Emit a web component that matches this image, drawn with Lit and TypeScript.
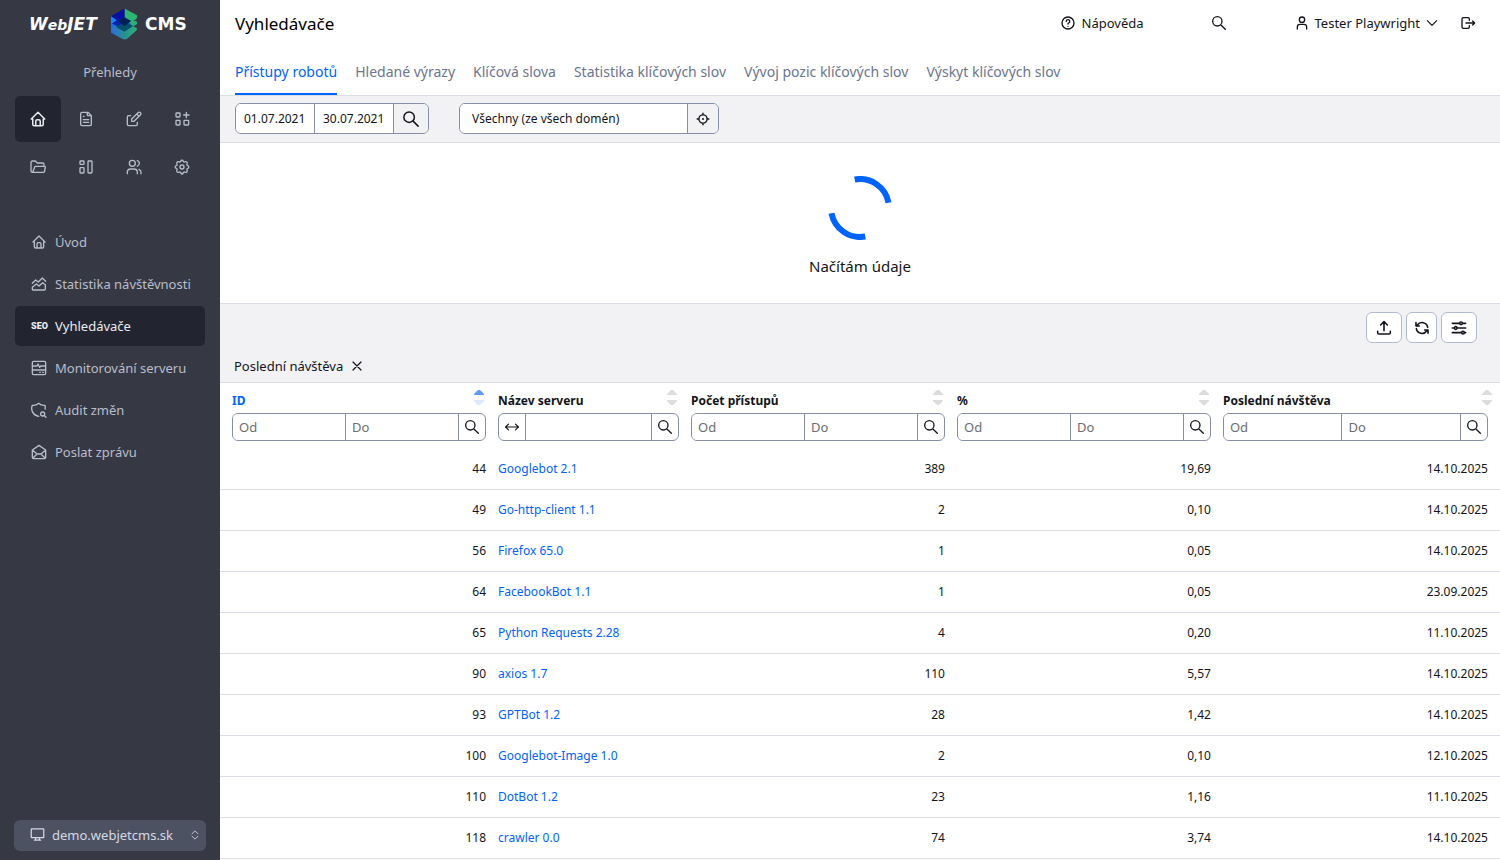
import { LitElement, html, css, svg } from "lit";
import { customElement, state } from "lit/decorators.js";
import { classMap } from "lit/directives/class-map.js";

const ICONS: Record<string, string> = {
  home: "M5 12H3l9-9 9 9h-2M5 12v7a2 2 0 0 0 2 2h10a2 2 0 0 0 2-2v-7M9 21v-6a2 2 0 0 1 2-2h2a2 2 0 0 1 2 2v6",
  file: "M14 2v4a1 1 0 0 0 1 1h5M18 22H6a2 2 0 0 1-2-2V4a2 2 0 0 1 2-2h9l5 5v13a2 2 0 0 1-2 2zM8 8h1M8 13h8M8 17h8",
  edit: "M7 7H4a2 2 0 0 0-2 2v11a2 2 0 0 0 2 2h11a2 2 0 0 0 2-2v-3M8.500 15.500h3.500l9.500-9.500a2.300 2.300 0 0 0-3.500-3.500L8.500 12v3.500M16 4.500l3.500 3.500",
  apps: "M4 3h4a1 1 0 0 1 1 1v4a1 1 0 0 1-1 1H4a1 1 0 0 1-1-1V4a1 1 0 0 1 1-1zM4 14h4a1 1 0 0 1 1 1v5a1 1 0 0 1-1 1H4a1 1 0 0 1-1-1v-5a1 1 0 0 1 1-1zM16 14h5a1 1 0 0 1 1 1v5a1 1 0 0 1-1 1h-5a1 1 0 0 1-1-1v-5a1 1 0 0 1 1-1zM14.500 6h8M18.500 2v8",
  folder: "M4 20l3.200-8.400A1 1 0 0 1 8.200 11H22a1 1 0 0 1 .986 1.164l-1.200 6.211A2 2 0 0 1 19.800 20H3.500a2 2 0 0 1-2-2V5a2 2 0 0 1 2-2h4.500l3 3h8a2 2 0 0 1 2 2v3",
  layout: "M4 3h4a1 1 0 0 1 1 1v3a1 1 0 0 1-1 1H4a1 1 0 0 1-1-1V4a1 1 0 0 1 1-1zM4 13h4a1 1 0 0 1 1 1v6a1 1 0 0 1-1 1H4a1 1 0 0 1-1-1v-6a1 1 0 0 1 1-1zM16 3h4a1 1 0 0 1 1 1v16a1 1 0 0 1-1 1h-4a1 1 0 0 1-1-1V4a1 1 0 0 1 1-1z",
  users: "M5 6.500a4.500 4.500 0 1 0 9 0a4.500 4.500 0 1 0-9 0M2 22v-2a5 5 0 0 1 5-5h5a5 5 0 0 1 5 5v2M17 2.300a4.500 4.500 0 0 1 0 8.500M22.500 22v-2a5 5 0 0 0-3-4.500",
  gear: "M10.325 3.017c.426-1.756 2.924-1.756 3.35 0a1.924 1.924 0 0 0 2.873 1.166c1.843-1.040 4.110 1.126 3.070 2.970a1.924 1.924 0 0 0 1.165 2.872c1.956.426 1.956 3.524 0 3.950a1.924 1.924 0 0 0-1.166 2.873c1.040 1.843-1.226 4.010-3.070 2.970a1.924 1.924 0 0 0-2.872 1.165c-.426 1.956-2.924 1.956-3.350 0a1.924 1.924 0 0 0-2.873-1.166c-1.843 1.040-4.110-1.126-3.070-2.970a1.924 1.924 0 0 0-1.165-2.872c-1.956-.426-1.956-3.524 0-3.950a1.924 1.924 0 0 0 1.166-2.873c-1.040-1.843 1.226-4.010 3.070-2.970c1.200.608 2.596.07 2.872-1.165zM9 12a3 3 0 1 0 6 0a3 3 0 1 0-6 0",
  chart: "M2 11l5-5 4 3 6-6 5 5M4 21h16a1.500 1.500 0 0 0 1.500-1.500V13l-4-3-5.500 5-4-3-6 5v3a1 1 0 0 0 1 1z",
  server: "M4 2h16a2 2 0 0 1 2 2v16a2 2 0 0 1-2 2H4a2 2 0 0 1-2-2V4a2 2 0 0 1 2-2zM2 9h7l1.500-3 2.500 5 1.500-2H22M2 15h20M13 18.500h1M17.500 18.500h1",
  shield: "M11.500 21.500A12 12 0 0 1 2 5 12 12 0 0 0 11.500 2 12 12 0 0 0 21 5a15 15 0 0 1 .2 5.500M14.500 18a3 3 0 1 0 6 0a3 3 0 1 0-6 0M20 20.500l2.500 2.500",
  mail: "M2 9l10-7 10 7v11a2 2 0 0 1-2 2H4a2 2 0 0 1-2-2V9l7 6h6l7-6M9 15l-6 6M15 15l6 6",
  desktop: "M3 3h18a1 1 0 0 1 1 1v12a1 1 0 0 1-1 1H3a1 1 0 0 1-1-1V4a1 1 0 0 1 1-1zM7 21h10M9 17v4M15 17v4",
  selector: "M5 9l7-7 7 7M5 15l7 7 7-7",
  help: "M3 12a9 9 0 1 0 18 0a9 9 0 1 0-18 0M12 17v.01M12 13.5a1.5 1.5 0 0 1 1-1.5 2.6 2.6 0 1 0-3.6-2.4",
  search: "M2.5 9.5a7 7 0 1 0 14 0a7 7 0 1 0-14 0M21.5 21.5l-7-7",
  user: "M8 7a4 4 0 1 0 8 0a4 4 0 1 0-8 0M5 21v-3a4 4 0 0 1 4-4h6a4 4 0 0 1 4 4v3",
  down: "M4 8l8 8 8-8",
  logout: "M14 8V6a2 2 0 0 0-2-2H5a2 2 0 0 0-2 2v12a2 2 0 0 0 2 2h7a2 2 0 0 0 2-2v-2M9 12h13M19 9l3 3-3 3",
  upload: "M2.500 17v2a2 2 0 0 0 2 2h15a2 2 0 0 0 2-2v-2M7 7.500l5-5 5 5M12 3v13",
  refresh: "M20.500 11A8.600 8.600 0 0 0 5 7.500L3.500 9M3 4v5h5M3.500 13A8.600 8.600 0 0 0 19 16.500l1.500-1.500M21 20v-5h-5",
  sliders: "M13 5a2 2 0 1 0 4 0a2 2 0 1 0-4 0M2 5h11M17 5h5M5 12a2 2 0 1 0 4 0a2 2 0 1 0-4 0M2 12h3M9 12h13M16 19a2 2 0 1 0 4 0a2 2 0 1 0-4 0M2 19h14M20 19h2",
  target: "M5 12a7 7 0 1 0 14 0a7 7 0 1 0-14 0M12 2v3M12 19v3M19 12h3M2 12h3M11.500 12a.5 .5 0 1 0 1 0a.5 .5 0 1 0-1 0",
  span: "M6 7l-5 5 5 5M18 7l5 5-5 5M1 12h22",
  close: "M4 4l16 16M20 4L4 20",
};

const icon = (name: string, size = 18, stroke = 2) => html`<svg
  width=${size} height=${size} viewBox="0 0 24 24" fill="none" stroke="currentColor"
  stroke-width=${stroke} stroke-linecap="round" stroke-linejoin="round" aria-hidden="true"
>${svg`<path d=${ICONS[name]}></path>`}</svg>`;

const MODULES: [string, string][] = [
  ["home", "Přehledy"], ["file", "Webové stránky"], ["edit", "Příspěvky"], ["apps", "Aplikace"],
  ["folder", "Soubory"], ["layout", "Šablony"], ["users", "Uživatelé"], ["gear", "Nastavení"],
];

const MENU: [string, string][] = [
  ["home", "Úvod"], ["chart", "Statistika návštěvnosti"], ["seo", "Vyhledávače"],
  ["server", "Monitorování serveru"], ["shield", "Audit změn"], ["mail", "Poslat zprávu"],
];

const TABS = ["Přístupy robotů", "Hledané výrazy", "Klíčová slova", "Statistika klíčových slov", "Vývoj pozic klíčových slov", "Výskyt klíčových slov"];

const COLUMNS = [
  { title: "ID", cls: "c-id", text: false },
  { title: "Název serveru", cls: "c-name", text: true },
  { title: "Počet přístupů", cls: "c-num", text: false },
  { title: "%", cls: "c-num", text: false },
  { title: "Poslední návštěva", cls: "c-date", text: false },
];

const ROWS: [number, string, number, string, string][] = [
  [44, "Googlebot 2.1", 389, "19,69", "14.10.2025"],
  [49, "Go-http-client 1.1", 2, "0,10", "14.10.2025"],
  [56, "Firefox 65.0", 1, "0,05", "14.10.2025"],
  [64, "FacebookBot 1.1", 1, "0,05", "23.09.2025"],
  [65, "Python Requests 2.28", 4, "0,20", "11.10.2025"],
  [90, "axios 1.7", 110, "5,57", "14.10.2025"],
  [93, "GPTBot 1.2", 28, "1,42", "14.10.2025"],
  [100, "Googlebot-Image 1.0", 2, "0,10", "12.10.2025"],
  [110, "DotBot 1.2", 23, "1,16", "11.10.2025"],
  [118, "crawler 0.0", 74, "3,74", "14.10.2025"],
];

const base = css`
  * { box-sizing: border-box; }
  a { color: inherit; text-decoration: none; }
  button, input, select { font: inherit; color: inherit; margin: 0; }
  button { cursor: pointer; padding: 0; border: 0; background: none; display: flex; align-items: center; justify-content: center; }
  svg { display: block; flex: none; }
`;

@customElement("side-bar")
class SideBar extends LitElement {
  static styles = [base, css`
    :host { display: flex; flex-direction: column; width: 220px; flex: none; background: #363944; color: #b9bdcb; font-size: 13px; overflow: hidden; }
    .logo { display: flex; align-items: center; height: 48px; padding-left: 29px; color: #fff; font: italic 700 17px/48px "DejaVu Sans", sans-serif; }
    .logo small { font-size: 14px; }
    .logo .web { width: 82px; }
    .logo .cms { font-style: normal; margin-left: 7px; }
    .heading { height: 48px; line-height: 48px; text-align: center; }
    .modules { display: grid; grid-template-columns: repeat(4, 46px); gap: 2px; padding: 0 15px; }
    .modules a { height: 46px; display: grid; place-items: center; border-radius: 5px; }
    .menu { display: flex; flex-direction: column; gap: 2px; padding: 32px 15px 0; }
    .menu a { display: flex; align-items: center; gap: 8px; height: 40px; padding-left: 16px; border-radius: 5px; white-space: nowrap; }
    .modules .active, .menu .active { background: #22252f; color: #e9ebf2; }
    .seo { width: 16px; font: 900 9px/16px Roboto, sans-serif; }
    .domain { display: flex; align-items: center; gap: 7px; margin: auto 14px 9px; height: 31px; padding: 0 6px 2px 16px; border-radius: 6px; background: #4d5263; color: #d5d8e2; }
    .domain select { flex: 1; min-width: 0; appearance: none; border: 0; background: none; padding: 0; outline: none; }
  `];

  render() {
    return html`
      <div class="logo">
        <span class="web">W<small>eb</small>JET</span>
        <svg width="27" height="32" viewBox="0 0 28 32">
          <defs>
            <linearGradient id="low" x1="0" x2="1"><stop offset="0" stop-color="#2b6ee0"></stop><stop offset=".5" stop-color="#2a8f93"></stop><stop offset="1" stop-color="#2fae7a"></stop></linearGradient>
          </defs>
          <path d="M0 8L14 16v15L0 24z" fill="#1f6fe8"></path>
          <path d="M0 20l14-6 12 6q2 1 0 3l-9 8q-3 2-6 0L0 25z" fill="url(#low)"></path>
          <path d="M14 11l12 2q2 1 1 3l-9 6-4 1z" fill="#2fae7a"></path>
          <path d="M0 14l14-5 8 9-8 5z" fill="#1055d0"></path>
          <path d="M14 0l13 7q1 2-1 4l-7 4-5-4z" fill="#2fb573"></path>
          <path d="M14 0L0 8v7l14-5z" fill="#0710a0"></path>
          <path d="M0 15l14-6v13z" fill="#0a22b0"></path>
          <path d="M0 8l6 4-6 4z" fill="#1688ff"></path>
          <path d="M5 19l9-5 9 4-9 6z" fill="#06506e"></path>
          <path d="M14 9l7 4-7 5-7-5z" fill="#021f55"></path>
        </svg>
        <span class="cms">CMS</span>
      </div>
      <div class="heading">Přehledy</div>
      <nav class="modules" aria-label="Moduly">
        ${MODULES.map(([name, label], i) => html`<a href="#" aria-label=${label} class=${classMap({ active: i === 0 })}>${icon(name, name === "home" ? 18 : 16, 2)}</a>`)}
      </nav>
      <nav class="menu" aria-label="Menu">
        ${MENU.map(([name, label]) => html`<a href="#" class=${classMap({ active: name === "seo" })}>
          ${name === "seo" ? html`<span class="seo">SEO</span>` : icon(name, 16, 2)}<span>${label}</span></a>`)}
      </nav>
      <div class="domain">
        ${icon("desktop", 15, 2)}
        <select aria-label="Doména"><option>demo.webjetcms.sk</option></select>
        ${icon("selector", 10, 2)}
      </div>`;
  }
}

@customElement("robots-table")
class RobotsTable extends LitElement {
  static styles = [base, css`
    :host { display: block; font-size: 12px; color: #13151b; }
    table { width: 100%; border-collapse: collapse; table-layout: fixed; }
    .c-id { width: 21.25%; }
    .c-name { width: 15.08%; }
    .c-num { width: 20.78%; }
    th, td { padding: 0 6px; }
    th:first-child, td:first-child { padding-left: 12px; }
    th:last-child, td:last-child { padding-right: 12px; }
    th { padding-top: 6px; padding-bottom: 7px; text-align: left; position: relative; }
    .title { display: block; line-height: 24px; font-weight: 700; }
    .sorted { color: #0063fb; }
    .sort { position: absolute; top: 7px; right: 8px; }
    .up, .down { fill: #dcdcdc; }
    .sorted + .sort .up { fill: #5e9bfa; }
    .sorted + .sort .down { fill: #dce8fd; }
    .filter { display: flex; height: 28px; border: 1px solid #868ea8; border-radius: 6px; overflow: hidden; font-weight: 400; font-size: 13px; }
    .filter input { flex: 1; width: 0; min-width: 0; border: 0 solid #868ea8; padding: 0 6px; outline: none; background: #fff; }
    .filter button { width: 27px; flex: none; border: 0 solid #868ea8; }
    .filter > * + input, .filter > * + button { border-left-width: 1px; }
    .filter button:first-child { width: 26px; }
    ::placeholder { color: #6c6d72; opacity: 1; }
    td { height: 41px; text-align: right; border-bottom: 1px solid #dcdee6; }
    td:nth-child(2) { text-align: left; color: #0063fb; }
  `];

  render() {
    return html`<table>
      <thead><tr>${COLUMNS.map((c, i) => html`<th class=${c.cls} scope="col">
        <span class="title ${i === 0 ? "sorted" : ""}">${c.title}</span>
        <svg class="sort" width="10" height="16" viewBox="0 0 10 16"><path class="up" d="M0 5V4L4 0h2l4 4v1z"></path><path class="down" d="M0 10h10v1l-4 4H4l-4-4z"></path></svg>
        <div class="filter">
          ${c.text
            ? html`<button aria-label="Obsahuje">${icon("span", 14, 2)}</button><input type="text" aria-label=${c.title} />`
            : html`<input type="text" placeholder="Od" aria-label="${c.title} od" /><input type="text" placeholder="Do" aria-label="${c.title} do" />`}
          <button aria-label="Hledat">${icon("search", 16, 2)}</button>
        </div></th>`)}</tr></thead>
      <tbody>${ROWS.map((r) => html`<tr>${r.map((v, i) => html`<td>${i === 1 ? html`<a href="#">${v}</a>` : v}</td>`)}</tr>`)}</tbody>
    </table>`;
  }
}

@customElement("app-root")
class AppRoot extends LitElement {
  @state() private tab = 0;

  static styles = [base, css`
    :host { display: flex; height: 100vh; overflow: hidden; font-family: "Noto Sans", "Open Sans", sans-serif; font-size: 13px; color: #13151b; background: #fff; }
    main { flex: 1; min-width: 0; display: flex; flex-direction: column; }
    main > * { flex: none; }
    header { display: flex; align-items: center; height: 47px; padding: 0 24px 1px 15px; }
    h1 { margin: 0 auto 0 0; font-size: 17px; font-weight: 400; color: #000; }
    .tool { display: flex; align-items: center; gap: 6px; }
    .tool.search { margin: 0 67px; }
    .tool.exit { margin-left: 21px; }
    .tool.user { gap: 5px; }
    .tabs { display: flex; gap: 18px; height: 49px; padding: 0 15px; border-bottom: 1px solid #dcdee6; color: #6d758f; font-size: 14px; }
    .tabs a { height: 48px; line-height: 50px; white-space: nowrap; }
    .tabs .active { color: #0063fb; border-bottom: 2px solid #0063fb; }
    .bar { display: flex; gap: 30px; padding: 7px 15px 8px; background: #f2f2f5; border-bottom: 1px solid #dcdee6; font-size: 12px; }
    .group { display: flex; height: 31px; border: 1px solid #868ea8; border-radius: 6px; overflow: hidden; background: #fff; }
    .group input { border: 0; padding: 0 8px; outline: none; background: #fff; border-right: 1px solid #868ea8; }
    .date { width: 79px; }
    .group .where { width: 228px; padding: 0 12px; }
    .group button { width: 34px; background: #f2f2f5; }
    .group .where + button { width: 30px; }
    .loading { display: flex; flex-direction: column; align-items: center; height: 161px; padding-top: 33px; border-bottom: 1px solid #dcdee6; font-size: 15px; gap: 16px; line-height: 20px; }
    .toolbar { background: #f2f2f5; border-bottom: 1px solid #dcdee6; height: 79px; padding: 8px 23px 5px 14px; display: flex; flex-direction: column; justify-content: space-between; }
    .buttons { display: flex; justify-content: flex-end; gap: 4px; }
    .buttons button { width: 36px; height: 31px; border: 1px solid #b3b9cf; border-radius: 6px; background: #fff; }
    .buttons .narrow { width: 31px; }
    .chip { display: flex; align-items: center; gap: 8px; line-height: 22px; }
  `];

  render() {
    return html`
      <side-bar></side-bar>
      <main>
        <header>
          <h1>Vyhledávače</h1>
          <a href="#" class="tool">${icon("help", 16, 2)}Nápověda</a>
          <button class="tool search" aria-label="Hledat">${icon("search", 16, 2)}</button>
          <button class="tool user">${icon("user", 16, 2)}<span>Tester Playwright</span>${icon("down", 14, 2)}</button>
          <button class="tool exit" aria-label="Odhlásit">${icon("logout", 16, 2)}</button>
        </header>
        <nav class="tabs">${TABS.map((t, i) => html`<a href="#" class=${classMap({ active: i === this.tab })} @click=${(e: Event) => { e.preventDefault(); this.tab = i; }}>${t}</a>`)}</nav>
        <div class="bar">
          <div class="group">
            <input class="date" type="text" aria-label="Od" .value=${"01.07.2021"} />
            <input class="date" type="text" aria-label="Do" .value=${"30.07.2021"} />
            <button aria-label="Hledat">${icon("search", 18, 2)}</button>
          </div>
          <div class="group">
            <input class="where" type="text" aria-label="Doména" .value=${"Všechny (ze všech domén)"} />
            <button aria-label="Vybrat">${icon("target", 14, 2.4)}</button>
          </div>
        </div>
        <div class="loading" role="status">
          <svg width="64" height="64" viewBox="0 0 64 64" fill="none" stroke="#0063fb" stroke-width="6">
            <path d="M26.700 3.500A29 29 0 0 1 60.500 26.700M37.300 60.500A29 29 0 0 1 3.500 37.300"></path>
          </svg>
          <span>Načítám údaje</span>
        </div>
        <div class="toolbar">
          <div class="buttons">
            <button aria-label="Exportovat">${icon("upload", 16, 2.4)}</button>
            <button class="narrow" aria-label="Obnovit">${icon("refresh", 16, 2.4)}</button>
            <button aria-label="Nastavení">${icon("sliders", 16, 2.4)}</button>
          </div>
          <div class="chip"><span>Poslední návštěva</span><button aria-label="Zrušit filtr">${icon("close", 12, 2.4)}</button></div>
        </div>
        <robots-table></robots-table>
      </main>`;
  }
}
